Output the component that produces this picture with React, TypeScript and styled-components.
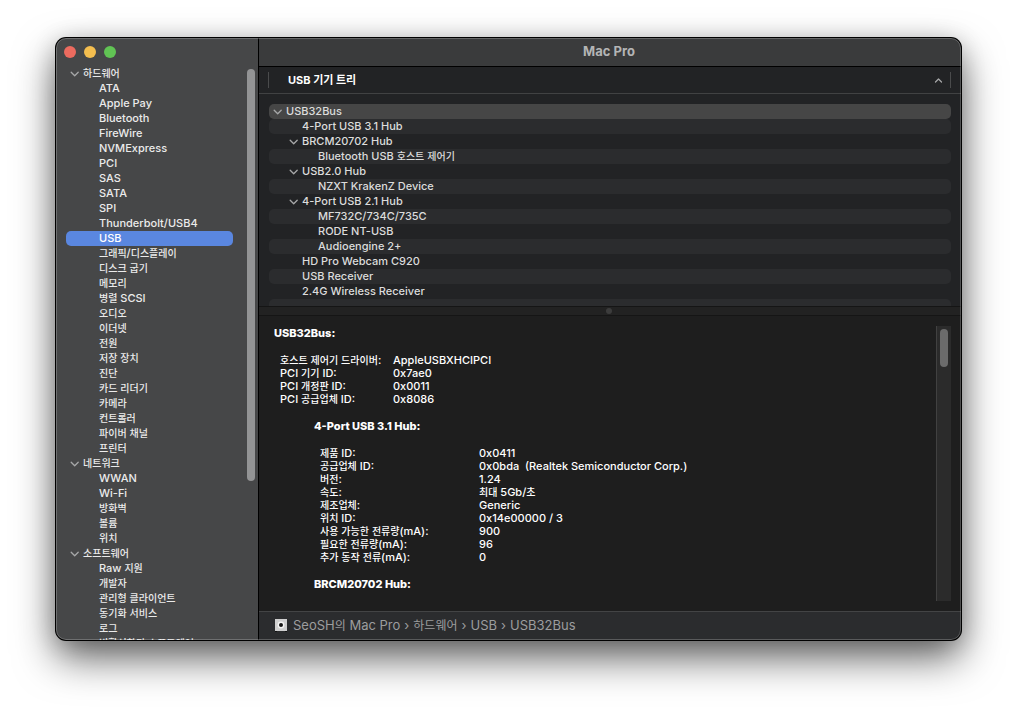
import React from "react";
import styled, { createGlobalStyle, css } from "styled-components";

const GlobalStyle = createGlobalStyle`
  *, *::before, *::after { box-sizing: border-box; }
  body {
    margin: 0;
    background: #fff;
    font-family: Inter, "Noto Sans CJK KR", sans-serif;
    font-size: 11px;
    line-height: 15px;
    color: #ebebeb;
  }
  ul, dl, dd, h1, h2, h3 { margin: 0; padding: 0; }
  ul { list-style: none; }
  button {
    margin: 0;
    padding: 0;
    border: 0;
    background: none;
    color: inherit;
    font: inherit;
    text-align: left;
  }
`;

const Page = styled.div`
  display: flex;
  height: 100vh;
  min-height: 480px;
  padding: 38px 56px 74px;
`;

const Window = styled.div`
  position: relative;
  display: flex;
  flex: 1;
  min-width: 0;
  overflow: hidden;
  border-radius: 10px;
`;

const WindowShadow = styled.div`
  display: flex;
  flex: 1;
  min-width: 0;
  border-radius: 10px;
  background: #1e1e1e;
  box-shadow:
    0 0 0 1px #000,
    0 18px 40px rgba(0, 0, 0, 0.6),
    0 4px 24px rgba(0, 0, 0, 0.2);
`;

const WindowEdge = styled.div`
  position: absolute;
  inset: 0;
  border: 1px solid rgba(255, 255, 255, 0.22);
  border-radius: 10px;
  pointer-events: none;
`;

const Hangul = styled.span<{ $size: number }>`
  font-family: "Noto Sans CJK KR", sans-serif;
  font-size: ${(p) => p.$size}px;
  line-height: 1;
`;

function Label({ text, size = 10 }: { text: string; size?: number }) {
  return (
    <>
      {text.split(/([\uac00-\ud7a3]+)/).map((run, i) =>
        i % 2 ? (
          <Hangul key={i} lang="ko" $size={size}>
            {run}
          </Hangul>
        ) : (
          run
        ),
      )}
    </>
  );
}

const Sidebar = styled.aside`
  position: relative;
  display: flex;
  flex-direction: column;
  flex: none;
  width: 203px;
  background: #464748;
  border-right: 1px solid #000;
`;

const Lights = styled.div`
  display: flex;
  flex: none;
  align-items: center;
  gap: 8px;
  height: 28px;
  padding-left: 8px;
`;

const Light = styled.button<{ $color: string }>`
  width: 12px;
  height: 12px;
  border-radius: 50%;
  background: ${(p) => p.$color};
`;

const SideList = styled.nav`
  flex: 1;
  min-height: 0;
  overflow: hidden;
  padding: 0 25px 0 10px;
`;

const SideGroup = styled.button`
  display: flex;
  align-items: center;
  gap: 4px;
  width: 100%;
  height: 15px;
  padding-left: 4px;
  font-weight: 500;
  white-space: nowrap;
`;

const SideItem = styled.button<{ $active?: boolean }>`
  display: block;
  width: 100%;
  height: 15px;
  padding-left: 33px;
  border-radius: 5px;
  font-weight: 500;
  white-space: nowrap;
  ${(p) =>
    p.$active &&
    css`
      background: #5a87e0;
      color: #fff;
    `}
`;

const SideThumb = styled.div`
  position: absolute;
  top: 31px;
  right: 3px;
  width: 8px;
  height: 68.5%;
  border-radius: 4px;
  background: #939495;
`;

const Chevron = styled.svg`
  flex: none;
  width: 9px;
  height: 9px;
  fill: none;
  stroke: #a6a7a8;
  stroke-width: 1.3;
  stroke-linecap: round;
  stroke-linejoin: round;
`;

function DownChevron() {
  return (
    <Chevron viewBox="0 0 9 9" aria-hidden="true">
      <path d="M1.2 3.2 L4.7 6.8 L8.2 3.2" />
    </Chevron>
  );
}

const Main = styled.main`
  display: flex;
  flex-direction: column;
  flex: 1;
  min-width: 0;
`;

const TitleBar = styled.header`
  display: flex;
  flex: none;
  align-items: center;
  justify-content: center;
  height: 29px;
  padding: 0 2px 1px 0;
  background: #3a3b3c;
  border-bottom: 1px solid #000;
`;

const WindowTitle = styled.h1`
  font-size: 13px;
  font-weight: 700;
  color: #b4b5b5;
`;

const TreePane = styled.section`
  display: flex;
  flex-direction: column;
  flex: none;
  height: 239px;
  overflow: hidden;
  background: #222325;
`;

const TreeHeader = styled.div`
  display: flex;
  flex: none;
  align-items: center;
  height: 27px;
  padding: 0 10px 0 9px;
  border-bottom: 1px solid #414243;
`;

const SortButton = styled.button`
  display: flex;
  flex: 1;
  align-items: center;
  justify-content: space-between;
  height: 16px;
  padding: 0 7px 0 19px;
  border: solid #4a4b4c;
  border-width: 0 1px;
  font-weight: 700;
  color: #fff;
`;

const TreeList = styled.ul`
  padding: 10px 10px 0;
`;

const TreeRow = styled.li<{ $striped: boolean; $selected?: boolean }>`
  height: 15px;
  border-radius: 5px;
  background: ${(p) =>
    p.$selected ? "#464646" : p.$striped ? "#2b2c2e" : "transparent"};
`;

const TreeButton = styled.button<{ $depth: number; $leaf: boolean }>`
  display: flex;
  align-items: center;
  gap: 4px;
  width: 100%;
  height: 15px;
  padding-left: ${(p) => 4 + p.$depth * 16 + (p.$leaf ? 13 : 0)}px;
  font-weight: 500;
  color: #dcdcdc;
  white-space: pre;
`;

const Splitter = styled.div`
  display: flex;
  flex: none;
  align-items: center;
  justify-content: center;
  height: 10px;
  padding-right: 2px;
  background: #222222;
  border: solid #151515;
  border-width: 1px 0;
`;

const Grip = styled.span`
  width: 6px;
  height: 6px;
  border-radius: 50%;
  background: #3c3c3c;
`;

const DetailPane = styled.section`
  display: flex;
  flex: 1;
  min-height: 0;
  padding: 10px 10px 10px 15px;
  background: #1e1e1e;
`;

const DetailText = styled.div`
  flex: 1;
  min-width: 0;
  overflow: hidden;
  color: #fff;
`;

const DetailTitle = styled.h2<{ $nested?: boolean }>`
  padding-left: ${(p) => (p.$nested ? 40 : 0)}px;
  font-size: 11px;
  line-height: 15px;
  font-weight: 800;
`;

const Fields = styled.dl<{ $nested?: boolean }>`
  display: grid;
  grid-template-columns: ${(p) => (p.$nested ? 159 : 113)}px 1fr;
  margin: 13px 0;
  padding-left: ${(p) => (p.$nested ? 46 : 6)}px;
  font-weight: 500;
  line-height: 13px;
  white-space: pre;
  dt, dd { height: 13px; }
`;

const DetailTrack = styled.div`
  flex: none;
  width: 15px;
  padding: 3px;
  background: #2b2b2b;
  border-left: 1px solid #414141;
`;

const DetailThumb = styled.div`
  width: 8px;
  height: 38px;
  border-radius: 4px;
  background: #6b6b6b;
`;

const PathBar = styled.footer`
  display: flex;
  flex: none;
  align-items: center;
  gap: 4px;
  height: 29px;
  padding: 0 0 2px 16px;
  background: #2b2c2e;
  border-top: 1px solid #434445;
  font-size: 13px;
  color: #9c9d9e;
  white-space: nowrap;
`;

const MachineIcon = styled.svg`
  flex: none;
  width: 12px;
  height: 13px;
  margin-right: 2px;
`;

type Group = { name: string; items: string[] };

const groups: Group[] = [
  {
    name: "하드웨어",
    items: [
      "ATA", "Apple Pay", "Bluetooth", "FireWire", "NVMExpress", "PCI", "SAS", "SATA", "SPI",
      "Thunderbolt/USB4", "USB", "그래픽/디스플레이", "디스크 굽기", "메모리", "병렬 SCSI",
      "오디오", "이더넷", "전원", "저장 장치", "진단", "카드 리더기", "카메라", "컨트롤러",
      "파이버 채널", "프린터",
    ],
  },
  { name: "네트워크", items: ["WWAN", "Wi-Fi", "방화벽", "볼륨", "위치"] },
  {
    name: "소프트웨어",
    items: ["Raw 지원", "개발자", "관리형 클라이언트", "동기화 서비스", "로그", "비활성화된 소프트웨어"],
  },
];

type Node = { name: string; depth: number; open?: boolean };

const tree: Node[] = [
  { name: "USB32Bus", depth: 0, open: true },
  { name: "4-Port USB 3.1 Hub", depth: 1 },
  { name: "BRCM20702 Hub", depth: 1, open: true },
  { name: "Bluetooth USB 호스트 제어기", depth: 2 },
  { name: "USB2.0 Hub", depth: 1, open: true },
  { name: "NZXT KrakenZ Device", depth: 2 },
  { name: "4-Port USB 2.1 Hub", depth: 1, open: true },
  { name: "MF732C/734C/735C", depth: 2 },
  { name: "RODE NT-USB", depth: 2 },
  { name: "Audioengine 2+", depth: 2 },
  { name: "HD Pro Webcam C920", depth: 1 },
  { name: "USB Receiver", depth: 1 },
  { name: "2.4G Wireless Receiver", depth: 1 },
];

const busFields: [string, string][] = [
  ["호스트 제어기 드라이버:", "AppleUSBXHCIPCI"],
  ["PCI 기기 ID:", "0x7ae0"],
  ["PCI 개정판 ID:", "0x0011"],
  ["PCI 공급업체 ID:", "0x8086"],
];

const hubFields: [string, string][] = [
  ["제품 ID:", "0x0411"],
  ["공급업체 ID:", "0x0bda  (Realtek Semiconductor Corp.)"],
  ["버전:", "1.24"],
  ["속도:", "최대 5Gb/초"],
  ["제조업체:", "Generic"],
  ["위치 ID:", "0x14e00000 / 3"],
  ["사용 가능한 전류량(mA):", "900"],
  ["필요한 전류량(mA):", "96"],
  ["추가 동작 전류(mA):", "0"],
];

const path = ["SeoSH의 Mac Pro", "하드웨어", "USB", "USB32Bus"];

function FieldList({ fields, nested }: { fields: [string, string][]; nested?: boolean }) {
  return (
    <Fields $nested={nested}>
      {fields.map(([name, value]) => (
        <React.Fragment key={name}>
          <dt><Label text={name} /></dt>
          <dd><Label text={value} /></dd>
        </React.Fragment>
      ))}
    </Fields>
  );
}

export default function App() {
  return (
    <>
      <GlobalStyle />
      <Page>
        <WindowShadow>
          <Window>
            <Sidebar>
              <Lights>
                <Light $color="#ec6b5f" aria-label="닫기" />
                <Light $color="#f4be4f" aria-label="최소화" />
                <Light $color="#61c454" aria-label="확대" />
              </Lights>
              <SideList>
                {groups.map((group) => (
                  <div key={group.name}>
                    <SideGroup aria-expanded="true">
                      <DownChevron />
                      <span><Label text={group.name} /></span>
                    </SideGroup>
                    <ul>
                      {group.items.map((item) => (
                        <li key={item}>
                          <SideItem $active={item === "USB"}>
                            <Label text={item} />
                          </SideItem>
                        </li>
                      ))}
                    </ul>
                  </div>
                ))}
              </SideList>
              <SideThumb />
            </Sidebar>
            <Main>
              <TitleBar>
                <WindowTitle>Mac Pro</WindowTitle>
              </TitleBar>
              <TreePane>
                <TreeHeader>
                  <SortButton>
                    <span><Label text="USB 기기 트리" size={11} /></span>
                    <Chevron viewBox="0 0 9 9" aria-hidden="true">
                      <path d="M1.5 6 L4.5 3 L7.5 6" />
                    </Chevron>
                  </SortButton>
                </TreeHeader>
                <TreeList>
                  {tree.map((node, i) => (
                    <TreeRow key={node.name} $striped={i % 2 === 1} $selected={i === 0}>
                      <TreeButton $depth={node.depth} $leaf={!node.open}>
                        {node.open && <DownChevron />}
                        <span><Label text={node.name} /></span>
                      </TreeButton>
                    </TreeRow>
                  ))}
                  <TreeRow $striped aria-hidden="true" />
                </TreeList>
              </TreePane>
              <Splitter>
                <Grip />
              </Splitter>
              <DetailPane>
                <DetailText>
                  <DetailTitle>USB32Bus:</DetailTitle>
                  <FieldList fields={busFields} />
                  <DetailTitle $nested>4-Port USB 3.1 Hub:</DetailTitle>
                  <FieldList fields={hubFields} nested />
                  <DetailTitle $nested>BRCM20702 Hub:</DetailTitle>
                </DetailText>
                <DetailTrack>
                  <DetailThumb />
                </DetailTrack>
              </DetailPane>
              <PathBar>
                <MachineIcon viewBox="0 0 12 13" aria-hidden="true">
                  <rect width="12" height="12" fill="#cfcfcf" />
                  <rect y="12" width="2" height="1" fill="#111" />
                  <rect x="10" y="12" width="2" height="1" fill="#111" />
                  <circle cx="6" cy="6" r="3.4" fill="#f4f4f4" />
                  <circle cx="6" cy="6" r="2" fill="#151515" />
                </MachineIcon>
                {path.map((step, i) => (
                  <React.Fragment key={step}>
                    {i > 0 && <span>›</span>}
                    <span><Label text={step} size={12} /></span>
                  </React.Fragment>
                ))}
              </PathBar>
            </Main>
            <WindowEdge />
          </Window>
        </WindowShadow>
      </Page>
    </>
  );
}
